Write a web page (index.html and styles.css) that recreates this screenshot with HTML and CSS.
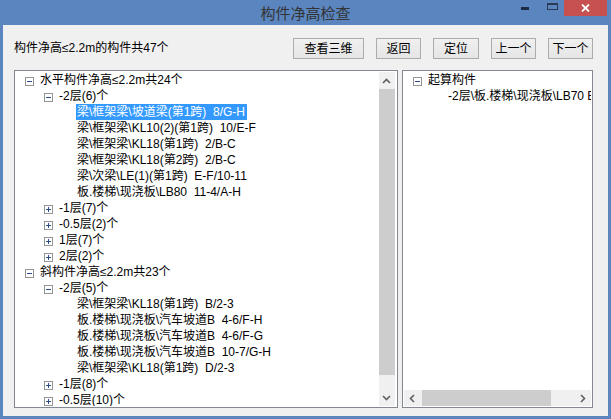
FILE: index.html
```html
<!DOCTYPE html>
<html lang="zh-CN">
<head>
<meta charset="utf-8">
<title>构件净高检查</title>
<link rel="stylesheet" href="styles.css">
</head>
<body>
<div class="window">
  <div class="titlebar">
    <div></div>
    <div class="title">构件净高检查</div>
    <div class="controls">
      <div class="ctl"><span class="min-glyph"></span></div>
      <div class="ctl"><span class="max-glyph"></span></div>
      <div class="ctl close">
        <svg width="9" height="8" viewBox="0 0 9 8"><path d="M1 0.5 L8 7.5 M8 0.5 L1 7.5" stroke="#fff" stroke-width="1.8" fill="none"/></svg>
      </div>
    </div>
  </div>
  <div class="client">
    <div class="toolbar">
      <div class="summary">构件净高≤2.2m的构件共47个</div>
      <div class="buttons">
        <div class="btn btn-wide">查看三维</div>
        <div class="btn">返回</div>
        <div class="btn btn-mid">定位</div>
        <div class="btn">上一个</div>
        <div class="btn">下一个</div>
      </div>
    </div>
    <div class="panes">
      <div class="pane pane-left">
        <div class="tree">
          <div class="row l0"><svg class="exp" width="9" height="9" viewBox="0 0 9 9"><rect x="0.5" y="0.5" width="8" height="8" fill="#fff" stroke="#949494"/><path d="M2 4.5H7" stroke="#2d4a8a"/></svg><span class="txt">水平构件净高≤2.2m共24个</span></div>
          <div class="row l1"><svg class="exp" width="9" height="9" viewBox="0 0 9 9"><rect x="0.5" y="0.5" width="8" height="8" fill="#fff" stroke="#949494"/><path d="M2 4.5H7" stroke="#2d4a8a"/></svg><span class="txt">-2层(6)个</span></div>
          <div class="row l2"><span class="txt sel">梁\框架梁\坡道梁(第1跨)  8/G-H</span></div>
          <div class="row l2"><span class="txt">梁\框架梁\KL10(2)(第1跨)  10/E-F</span></div>
          <div class="row l2"><span class="txt">梁\框架梁\KL18(第1跨)  2/B-C</span></div>
          <div class="row l2"><span class="txt">梁\框架梁\KL18(第2跨)  2/B-C</span></div>
          <div class="row l2"><span class="txt">梁\次梁\LE(1)(第1跨)  E-F/10-11</span></div>
          <div class="row l2"><span class="txt">板.楼梯\现浇板\LB80  11-4/A-H</span></div>
          <div class="row l1"><svg class="exp" width="9" height="9" viewBox="0 0 9 9"><rect x="0.5" y="0.5" width="8" height="8" fill="#fff" stroke="#949494"/><path d="M2 4.5H7M4.5 2V7" stroke="#2d4a8a"/></svg><span class="txt">-1层(7)个</span></div>
          <div class="row l1"><svg class="exp" width="9" height="9" viewBox="0 0 9 9"><rect x="0.5" y="0.5" width="8" height="8" fill="#fff" stroke="#949494"/><path d="M2 4.5H7M4.5 2V7" stroke="#2d4a8a"/></svg><span class="txt">-0.5层(2)个</span></div>
          <div class="row l1"><svg class="exp" width="9" height="9" viewBox="0 0 9 9"><rect x="0.5" y="0.5" width="8" height="8" fill="#fff" stroke="#949494"/><path d="M2 4.5H7M4.5 2V7" stroke="#2d4a8a"/></svg><span class="txt">1层(7)个</span></div>
          <div class="row l1"><svg class="exp" width="9" height="9" viewBox="0 0 9 9"><rect x="0.5" y="0.5" width="8" height="8" fill="#fff" stroke="#949494"/><path d="M2 4.5H7M4.5 2V7" stroke="#2d4a8a"/></svg><span class="txt">2层(2)个</span></div>
          <div class="row l0"><svg class="exp" width="9" height="9" viewBox="0 0 9 9"><rect x="0.5" y="0.5" width="8" height="8" fill="#fff" stroke="#949494"/><path d="M2 4.5H7" stroke="#2d4a8a"/></svg><span class="txt">斜构件净高≤2.2m共23个</span></div>
          <div class="row l1"><svg class="exp" width="9" height="9" viewBox="0 0 9 9"><rect x="0.5" y="0.5" width="8" height="8" fill="#fff" stroke="#949494"/><path d="M2 4.5H7" stroke="#2d4a8a"/></svg><span class="txt">-2层(5)个</span></div>
          <div class="row l2"><span class="txt">梁\框架梁\KL18(第1跨)  B/2-3</span></div>
          <div class="row l2"><span class="txt">板.楼梯\现浇板\汽车坡道B  4-6/F-H</span></div>
          <div class="row l2"><span class="txt">板.楼梯\现浇板\汽车坡道B  4-6/F-G</span></div>
          <div class="row l2"><span class="txt">板.楼梯\现浇板\汽车坡道B  10-7/G-H</span></div>
          <div class="row l2"><span class="txt">梁\框架梁\KL18(第1跨)  D/2-3</span></div>
          <div class="row l1"><svg class="exp" width="9" height="9" viewBox="0 0 9 9"><rect x="0.5" y="0.5" width="8" height="8" fill="#fff" stroke="#949494"/><path d="M2 4.5H7M4.5 2V7" stroke="#2d4a8a"/></svg><span class="txt">-1层(8)个</span></div>
          <div class="row l1"><svg class="exp" width="9" height="9" viewBox="0 0 9 9"><rect x="0.5" y="0.5" width="8" height="8" fill="#fff" stroke="#949494"/><path d="M2 4.5H7M4.5 2V7" stroke="#2d4a8a"/></svg><span class="txt">-0.5层(10)个</span></div>
        </div>
        <div class="vscroll">
          <div class="sb-arrow"><svg width="9" height="6" viewBox="0 0 9 6"><path d="M1 5 L4.5 1.5 L8 5" fill="none" stroke="#606060" stroke-width="1.6"/></svg></div>
          <div class="vtrack"><div class="vthumb"></div></div>
          <div class="sb-arrow"><svg width="9" height="6" viewBox="0 0 9 6"><path d="M1 1 L4.5 4.5 L8 1" fill="none" stroke="#606060" stroke-width="1.6"/></svg></div>
        </div>
      </div>
      <div class="pane pane-right">
        <div class="tree">
          <div class="row l0"><svg class="exp" width="9" height="9" viewBox="0 0 9 9"><rect x="0.5" y="0.5" width="8" height="8" fill="#fff" stroke="#949494"/><path d="M2 4.5H7" stroke="#2d4a8a"/></svg><span class="txt">起算构件</span></div>
          <div class="row l1n"><span class="txt">-2层\板.楼梯\现浇板\LB70 E</span></div>
        </div>
        <div class="hscroll">
          <div class="sb-arrow-h"><svg width="6" height="9" viewBox="0 0 6 9"><path d="M5 1 L1.5 4.5 L5 8" fill="none" stroke="#606060" stroke-width="1.6"/></svg></div>
          <div class="htrack"><div class="hthumb"></div></div>
          <div class="sb-arrow-h"><svg width="6" height="9" viewBox="0 0 6 9"><path d="M1 1 L4.5 4.5 L1 8" fill="none" stroke="#606060" stroke-width="1.6"/></svg></div>
        </div>
      </div>
    </div>
  </div>
</div>
</body>
</html>
```

FILE: styles.css
```css
html, body {
  margin: 0;
  padding: 0;
}
body {
  width: 611px;
  height: 419px;
  overflow: hidden;
  background: #5a85be;
  font-family: "Liberation Sans", "Noto Sans CJK SC", sans-serif;
  font-size: 12px;
  color: #000;
}
.window {
  width: 611px;
  height: 419px;
  display: flex;
  flex-direction: column;
}
.titlebar {
  height: 25px;
  flex: none;
  display: grid;
  grid-template-columns: 1fr auto 1fr;
  align-items: center;
}
.title {
  font-family: "Noto Sans CJK SC", sans-serif;
  font-size: 15px;
  line-height: 25px;
  color: #333;
}
.controls {
  justify-self: end;
  align-self: start;
  display: flex;
  padding-right: 4px;
}
.ctl {
  width: 26px;
  height: 16px;
  display: flex;
  justify-content: center;
  align-items: flex-start;
}
.min-glyph {
  width: 8px;
  height: 3px;
  margin-top: 7px;
  background: #1c2a42;
}
.max-glyph {
  width: 11px;
  height: 7px;
  margin-top: 3px;
  margin-left: 2px;
  box-sizing: border-box;
  border: 1px solid #2c3a55;
  border-top-width: 2px;
}
.close {
  width: 43px;
  background: #c75050;
  align-items: center;
}
.client {
  flex: 1;
  margin: 0 3px 3px 3px;
  background: #f0f0f0;
  padding: 13px 15px 8px 11px;
  display: flex;
  flex-direction: column;
}
.toolbar {
  height: 21px;
  display: flex;
  align-items: center;
  justify-content: space-between;
}
.summary {
  line-height: 16px;
  margin-top: -2px;
}
.buttons {
  display: flex;
  gap: 12px;
}
.btn {
  width: 45px;
  height: 21px;
  box-sizing: border-box;
  border: 1px solid #acacac;
  background: linear-gradient(#f0f0f0, #e5e5e5);
  display: flex;
  align-items: center;
  justify-content: center;
  line-height: 16px;
}
.btn-wide {
  width: 71px;
}
.btn-mid {
  width: 46px;
}
.panes {
  margin-top: 11px;
  height: 338px;
  display: flex;
  gap: 4px;
}
.pane {
  box-sizing: border-box;
  height: 338px;
  border: 1px solid #828790;
  padding: 1px;
  background: #fff;
  overflow: hidden;
}
.pane-left {
  width: 386px;
  display: flex;
}
.pane-right {
  width: 192px;
  display: flex;
  flex-direction: column;
}
.tree {
  flex: 1;
  overflow: hidden;
  min-width: 0;
  min-height: 0;
}
.row {
  height: 16px;
  display: flex;
  align-items: flex-start;
  white-space: pre;
}
.row.l0 { padding-left: 9px; }
.row.l1 { padding-left: 28px; }
.row.l2 { padding-left: 60px; }
.row.l1n { padding-left: 43px; }
.exp {
  flex: none;
  margin-top: 5px;
  margin-right: 5px;
}
.txt {
  display: block;
  height: 16px;
  line-height: 16px;
  padding: 0 2px 0 1px;
}
.sel {
  background: #3399ff;
  color: #fff;
}
.vscroll {
  width: 16px;
  flex: none;
  margin-right: 1px;
  background: #f0f0f0;
  display: flex;
  flex-direction: column;
}
.sb-arrow {
  height: 17px;
  flex: none;
  display: flex;
  align-items: center;
  justify-content: center;
}
.vtrack {
  flex: 1;
}
.vthumb {
  height: 286px;
  background: #cdcdcd;
}
.hscroll {
  height: 16px;
  flex: none;
  background: #f0f0f0;
  display: flex;
}
.sb-arrow-h {
  width: 17px;
  flex: none;
  display: flex;
  align-items: center;
  justify-content: center;
}
.htrack {
  flex: 1;
  padding-left: 1px;
}
.hthumb {
  width: 129px;
  height: 16px;
  background: #cdcdcd;
}
```
